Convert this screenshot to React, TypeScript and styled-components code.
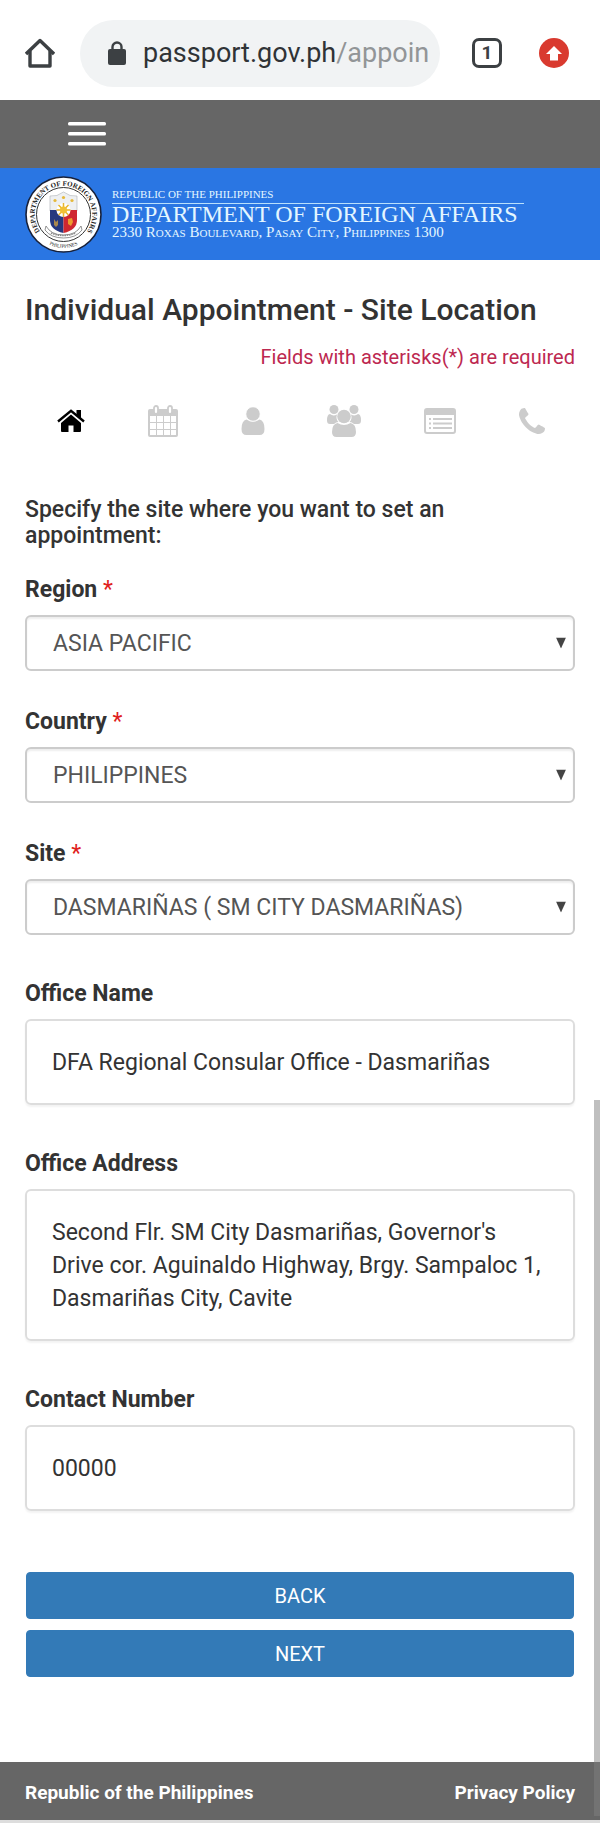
import React from "react";
import styled, { createGlobalStyle } from "styled-components";

const Global = createGlobalStyle`
  *, *::before, *::after { box-sizing: border-box; }
  body { margin: 0; background: #fff; color: #333; font-family: Roboto, "Liberation Sans", sans-serif; }
  h1, h2, p, dl, dd { margin: 0; }
`;

const BrowserBar = styled.header`
  display: flex;
  align-items: center;
  height: 100px;
  padding: 6px 31px 0 25px;
`;

const IconButton = styled.button`
  flex: none;
  display: flex;
  padding: 0;
  border: 0;
  background: none;
  color: #3c4043;
`;

const AddressPill = styled.div`
  flex: 1;
  min-width: 0;
  display: flex;
  align-items: center;
  height: 67px;
  margin: 0 32px 0 25px;
  padding: 0 12px 0 28px;
  border-radius: 34px;
  background: #f1f3f4;
`;

const Url = styled.div`
  flex: 1;
  min-width: 0;
  margin-left: 17px;
  overflow: hidden;
  white-space: nowrap;
  font-size: 27px;
  line-height: 36px;
  color: #303336;
`;

const UrlPath = styled.span`
  color: #929597;
`;

const TabCount = styled.button`
  flex: none;
  width: 30px;
  height: 30px;
  margin-right: 37px;
  padding: 0;
  border: 3px solid #3c4043;
  border-radius: 7px;
  background: none;
  color: #3c4043;
  font: 700 19px/24px Roboto, sans-serif;
`;

const NavBar = styled.nav`
  display: flex;
  align-items: center;
  height: 68px;
  padding: 0 68px;
  background: #666;
`;

const Banner = styled.div`
  display: flex;
  align-items: center;
  gap: 10px;
  height: 92px;
  padding: 0 25px;
  background: #2a76e3;
  color: #e4f6ff;
  font-family: "Liberation Serif", serif;
`;

const BannerText = styled.div`
  white-space: nowrap;
`;

const BannerTop = styled.p`
  padding-bottom: 2px;
  border-bottom: 1px solid #b9e0fc;
  font-size: 11px;
  line-height: 14px;
`;

const BannerName = styled.p`
  padding-right: 6px;
  font-size: 24px;
  line-height: 20px;
`;

const BannerAddress = styled.p`
  font-size: 15px;
  line-height: 17px;
  font-variant: small-caps;
`;

const Main = styled.main`
  padding: 31px 25px 85px;
`;

const Title = styled.h1`
  font-size: 30px;
  line-height: 38px;
  font-weight: 500;
`;

const RequiredNote = styled.p`
  margin-top: 14px;
  text-align: right;
  font-size: 20px;
  line-height: 28px;
  color: #bd2850;
`;

const Steps = styled.div`
  display: flex;
  justify-content: space-between;
  align-items: center;
  height: 36px;
  margin: 32px 30px 58px 32px;
`;

const Step = styled.button<{ $active?: boolean }>`
  display: flex;
  padding: 0;
  border: 0;
  background: none;
  color: ${(p) => (p.$active ? "#000" : "#ccc")};
`;

const Prompt = styled.h2`
  margin-bottom: 24px;
  font-size: 23px;
  line-height: 26px;
  font-weight: 500;
`;

const Field = styled.div`
  margin-bottom: 34px;
`;

const Label = styled.label`
  display: block;
  margin-bottom: 9px;
  font-size: 23px;
  line-height: 33px;
  font-weight: 700;
`;

const Star = styled.span`
  color: #e02020;
  font-weight: 400;
`;

const SelectWrap = styled.div`
  position: relative;
`;

const Select = styled.select`
  display: block;
  width: 100%;
  height: 56px;
  padding: 0 26px;
  border: 2px solid #ccc;
  border-radius: 6px;
  background: #fff;
  box-shadow: inset 0 2px 2px rgba(0, 0, 0, 0.07);
  appearance: none;
  color: #555;
  font: 400 23px/33px Roboto, sans-serif;
`;

const Arrow = styled.svg`
  position: absolute;
  right: 9px;
  top: 50%;
  transform: translateY(-50%);
  pointer-events: none;
`;

const Details = styled.dl`
  padding-top: 8px;
`;

const Detail = styled.div`
  margin-bottom: 42px;
`;

const Term = styled.dt`
  margin-bottom: 9px;
  font-size: 23px;
  line-height: 33px;
  font-weight: 700;
`;

const Panel = styled.dd`
  padding: 25px 20px 24px 25px;
  border: 2px solid #ddd;
  border-radius: 6px;
  box-shadow: 0 2px 2px rgba(0, 0, 0, 0.05);
  font-size: 23px;
  line-height: 33px;
`;

const Actions = styled.div`
  display: flex;
  flex-direction: column;
  gap: 11px;
  margin-top: 61px;
  padding: 0 1px;
`;

const Action = styled.button`
  height: 47px;
  border: 1px solid #337ab7;
  border-radius: 4px;
  background: #337ab7;
  color: #fff;
  font: 400 20px/28px Roboto, sans-serif;
`;

const Footer = styled.footer`
  display: flex;
  align-items: center;
  justify-content: space-between;
  height: 58px;
  padding: 2px 25px 0;
  background: #666;
  color: #fff;
  font-size: 19px;
  font-weight: 700;
`;

const FooterLink = styled.a`
  color: inherit;
  text-decoration: none;
`;

const Page = styled.div`
  position: relative;
  border-bottom: 3px solid #ddd;
`;

const ScrollThumb = styled.div`
  position: absolute;
  right: 0;
  bottom: 4px;
  width: 6px;
  height: 716px;
  background: rgba(128, 128, 128, 0.5);
`;

const Seal = () => (
  <svg width="77" height="77" viewBox="0 0 77 77" role="img" aria-label="Department of Foreign Affairs seal">
    <defs>
      <path id="sealTop" d="M15.6 56 A28.8 28.8 0 1 1 61.4 56" />
      <path id="sealBottom" d="M17 64 A33.5 33.5 0 0 0 60 64" />
    </defs>
    <circle cx="38.5" cy="38.5" r="37.5" fill="#fff" stroke="#18213a" strokeWidth="1.6" />
    <circle cx="38.5" cy="38.5" r="27" fill="#fff" stroke="#333" strokeWidth="1" />
    <text fontFamily="Liberation Serif, serif" fontWeight="700" fontSize="7" fill="#222">
      <textPath href="#sealTop" startOffset="50%" textAnchor="middle">DEPARTMENT OF FOREIGN AFFAIRS</textPath>
    </text>
    <text fontFamily="Liberation Serif, serif" fontSize="5" fill="#222">
      <textPath href="#sealBottom" startOffset="50%" textAnchor="middle">PHILIPPINES</textPath>
    </text>
    <path d="M25 20 Q32 21 38.5 16 Q45 21 52 20 V35 H25Z" fill="#eef0f2" stroke="#b5b9bd" strokeWidth="0.7" />
    <path d="M25 34 H38.5 V57 Q25 54 25 44Z" fill="#27397f" />
    <path d="M52 34 H38.5 V57 Q52 54 52 44Z" fill="#cf2730" />
    <circle cx="38.5" cy="34" r="7" fill="#fff" />
    <g stroke="#e7b52d" strokeWidth="1.5">
      <path d="M38.5 27V41M31.5 34H45.5M33.5 29L43.5 39M43.5 29L33.5 39" />
    </g>
    <circle cx="38.5" cy="34" r="3.6" fill="#f1c136" />
    <g fill="#e5b93c">
      <circle cx="30" cy="24.5" r="1.6" />
      <circle cx="38.5" cy="21.5" r="1.6" />
      <circle cx="47" cy="24.5" r="1.6" />
    </g>
    <path d="M29 43 L31 46 L33 44 V49 L31 51 L29 49Z" fill="#a9884e" />
    <path d="M43 43 L47 42 L48 46 L46 50 L43 48Z" fill="#ee9b2d" />
    <path d="M21 50 Q26 59 38.5 59 Q51 59 56 50 L57 54 Q51 62 38.5 62 Q26 62 20 54Z" fill="#fff" stroke="#777" strokeWidth="0.8" />
    <path d="M26 57 Q38 62 51 57" fill="none" stroke="#888" strokeWidth="1.5" strokeDasharray="1.5 0.8" />
  </svg>
);

const HomeOutline = () => (
  <svg width="30" height="30" viewBox="0 0 30 30" fill="none" stroke="currentColor" strokeWidth="3.4" strokeLinejoin="round">
    <path d="M1 16 L15 2.5 L29 16" />
    <path d="M5 13 V28 H25 V13" />
  </svg>
);

const Lock = () => (
  <svg width="18" height="24" viewBox="0 0 18 24" aria-hidden="true">
    <rect y="8" width="18" height="16" rx="2" fill="#3c4043" />
    <path d="M4.5 9 V6 A4.5 4.5 0 0 1 13.5 6 V9" fill="none" stroke="#3c4043" strokeWidth="2.4" />
  </svg>
);

const UpdateBadge = () => (
  <svg width="30" height="30" viewBox="0 0 30 30">
    <circle cx="15" cy="15" r="15" fill="#d93a2f" />
    <path d="M15 8 L23 16 H19 V22.500 H11 V16 H7Z" fill="#fff" />
  </svg>
);

const Bars = () => (
  <svg width="38" height="26" viewBox="0 0 38 26" fill="#fff">
    <rect y="1" width="38" height="3.500" rx="1.500" />
    <rect y="11" width="38" height="3.500" rx="1.500" />
    <rect y="21" width="38" height="3.500" rx="1.500" />
  </svg>
);

const HomeIcon = () => (
  <svg width="28" height="24" viewBox="0 0 28 24" fill="currentColor">
    <path d="M14 5.5 L24 14 V22 Q24 23 23 23 H16.5 V16.5 H11.5 V23 H5 Q4 23 4 22 V14Z" />
    <path d="M1 12.5 L14 1.8 L27 12.5" fill="none" stroke="currentColor" strokeWidth="2.4" />
    <path d="M19.5 1 H24 V10 L19.5 6Z" />
  </svg>
);

const CalendarIcon = () => (
  <svg width="30" height="32" viewBox="0 0 30 32">
    <rect y="4" width="30" height="28" rx="2" fill="currentColor" />
    <g fill="#fff">
      {[2, 9, 16, 23].map((x) =>
        [11, 18, 25].map((y) => <rect key={`${x}-${y}`} x={x} y={y} width={x === 23 ? 5 : 6} height={y === 25 ? 5 : 6} />),
      )}
    </g>
    <g fill="#fff" stroke="currentColor" strokeWidth="1.8">
      <rect x="6" y="1" width="4" height="8" rx="2" />
      <rect x="20" y="1" width="4" height="8" rx="2" />
    </g>
  </svg>
);

const UserIcon = () => (
  <svg width="24" height="28" viewBox="0 0 24 28" fill="currentColor">
    <path d="M5.5 12.500 Q12 17 18.5 12.500 Q23.500 13.500 23.500 22 Q23.500 28 18.500 28 H5.500 Q0.500 28 0.500 22 Q0.500 13.500 5.500 12.500Z" />
    <circle cx="12" cy="7" r="7.200" stroke="#fff" strokeWidth="0.800" />
  </svg>
);

const UsersIcon = () => (
  <svg width="34" height="32" viewBox="0 0 34 32" fill="currentColor">
    <circle cx="7" cy="4.5" r="4.5" />
    <circle cx="27" cy="4.5" r="4.5" />
    <path d="M3 9 Q6 11.5 10 9.500 Q8.500 14 11.500 17 Q9 17 7 19 H3 Q0 19 0 15.500 Q0 9 3 9Z" />
    <path d="M31 9 Q28 11.5 24 9.500 Q25.500 14 22.500 17 Q25 17 27 19 H31 Q34 19 34 15.500 Q34 9 31 9Z" />
    <circle cx="17" cy="11.500" r="6.800" />
    <path d="M10.500 18 Q17 22 23.500 18 Q29 19 29 27 Q29 32 24.500 32 H9.500 Q5 32 5 27 Q5 19 10.500 18Z" />
  </svg>
);

const ListIcon = () => (
  <svg width="32" height="26" viewBox="0 0 32 26">
    <rect x="1" y="1" width="30" height="24" rx="2" fill="none" stroke="currentColor" strokeWidth="2" />
    <path d="M1 1 H31 V7 H1Z" fill="currentColor" />
    <path d="M5 11 H7M5 15.500 H7M5 20 H7M9 11 H28M9 15.500 H28M9 20 H28" stroke="currentColor" strokeWidth="2" />
  </svg>
);

const PhoneIcon = () => (
  <svg width="26" height="26" viewBox="0 0 1408 1408" fill="currentColor">
    <path d="M1408 1112q0 27-10 70.500t-21 68.500q-21 50-122 106-94 51-186 51-27 0-53-3.500t-57.500-12.500-47-14.500-55.500-20.500-49-18q-98-35-175-83-127-79-264-216T152 776q-48-77-83-175-3-9-18-49t-20.500-55.500-14.500-47T3.500 392 0 339q0-92 51-186Q107 52 157 31q25-11 68.500-21T296 0q14 0 21 3 18 6 53 76 11 19 30 54t35 63.500 31 53.500q3 4 17.500 25t21.500 35.500 7 28.500q0 20-28.500 50t-62 55-62 53-28.500 46q0 9 5 22.500t8.500 20.500 14 24 11.500 19q76 137 174 235t235 174q2 1 19 11.500t24 14 20.500 8.500 22.500 5q18 0 46-28.500t53-62 55-62 50-28.500q14 0 28.500 7t35.500 21.500 25 17.500q25 15 53.500 31t63.500 35 54 30q70 35 76 53 3 7 3 21z" />
  </svg>
);

const steps = [
  { name: "Site location", Icon: HomeIcon },
  { name: "Schedule", Icon: CalendarIcon },
  { name: "Applicant", Icon: UserIcon },
  { name: "Family", Icon: UsersIcon },
  { name: "Summary", Icon: ListIcon },
  { name: "Contact", Icon: PhoneIcon },
];

const selects = [
  { id: "region", label: "Region", value: "ASIA PACIFIC" },
  { id: "country", label: "Country", value: "PHILIPPINES" },
  { id: "site", label: "Site", value: "DASMARIÑAS ( SM CITY DASMARIÑAS)" },
];

const details = [
  { label: "Office Name", value: "DFA Regional Consular Office - Dasmariñas" },
  {
    label: "Office Address",
    value: "Second Flr. SM City Dasmariñas, Governor's Drive cor. Aguinaldo Highway, Brgy. Sampaloc 1, Dasmariñas City, Cavite",
  },
  { label: "Contact Number", value: "00000" },
];

export default function App() {
  return (
    <Page>
      <Global />
      <BrowserBar>
        <IconButton type="button" aria-label="Home">
          <HomeOutline />
        </IconButton>
        <AddressPill>
          <Lock />
          <Url>
            passport.gov.ph<UrlPath>/appoin</UrlPath>
          </Url>
        </AddressPill>
        <TabCount type="button" aria-label="Open tabs">1</TabCount>
        <IconButton type="button" aria-label="Update">
          <UpdateBadge />
        </IconButton>
      </BrowserBar>
      <NavBar>
        <IconButton type="button" aria-label="Menu">
          <Bars />
        </IconButton>
      </NavBar>
      <Banner>
        <Seal />
        <BannerText>
          <BannerTop>REPUBLIC OF THE PHILIPPINES</BannerTop>
          <BannerName>DEPARTMENT OF FOREIGN AFFAIRS</BannerName>
          <BannerAddress>2330 Roxas Boulevard, Pasay City, Philippines 1300</BannerAddress>
        </BannerText>
      </Banner>
      <Main>
        <Title>Individual Appointment - Site Location</Title>
        <RequiredNote>Fields with asterisks(*) are required</RequiredNote>
        <Steps>
          {steps.map(({ name, Icon }, i) => (
            <Step key={name} type="button" aria-label={name} $active={i === 0}>
              <Icon />
            </Step>
          ))}
        </Steps>
        <Prompt>Specify the site where you want to set an appointment:</Prompt>
        {selects.map((s) => (
          <Field key={s.id}>
            <Label htmlFor={s.id}>
              {s.label} <Star>*</Star>
            </Label>
            <SelectWrap>
              <Select id={s.id} defaultValue={s.value}>
                <option>{s.value}</option>
              </Select>
              <Arrow width="10" height="11" viewBox="0 0 10 11" aria-hidden="true">
                <path d="M0 0H10L5 11Z" fill="#444" />
              </Arrow>
            </SelectWrap>
          </Field>
        ))}
        <Details>
          {details.map((d) => (
            <Detail key={d.label}>
              <Term>{d.label}</Term>
              <Panel>{d.value}</Panel>
            </Detail>
          ))}
        </Details>
        <Actions>
          <Action type="button">BACK</Action>
          <Action type="button">NEXT</Action>
        </Actions>
      </Main>
      <Footer>
        <span>Republic of the Philippines</span>
        <FooterLink href="#privacy">Privacy Policy</FooterLink>
      </Footer>
      <ScrollThumb />
    </Page>
  );
}
